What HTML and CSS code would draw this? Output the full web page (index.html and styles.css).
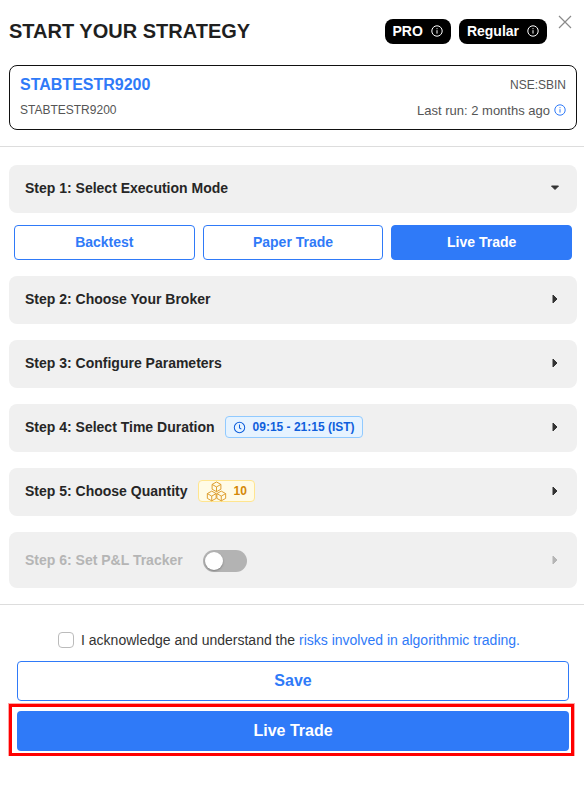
FILE: index.html
```html
<!DOCTYPE html>
<html lang="en">
<head>
  <meta charset="UTF-8" />
  <title>Start Your Strategy</title>
  <meta name="viewport" content="width=device-width, initial-scale=1.0" />
  <link rel="stylesheet" href="styles.css">
</head>
<body>
  <header class="top">
    <h1>START YOUR STRATEGY</h1>
    <div class="pills">
      <span class="pill">PRO
        <svg class="info" viewBox="0 0 12 12"><circle cx="6" cy="6" r="5.2"/><path d="M6 5.2v3.4M6 3.2v1"/></svg>
      </span>
      <span class="pill">Regular
        <svg class="info" viewBox="0 0 12 12"><circle cx="6" cy="6" r="5.2"/><path d="M6 5.2v3.4M6 3.2v1"/></svg>
      </span>
    </div>
    <svg class="close" viewBox="0 0 14 14"><path d="M1 1l12 12M13 1L1 13"/></svg>
  </header>

  <section class="strategy">
    <div class="strategy-row">
      <span class="strategy-name">STABTESTR9200</span>
      <span class="muted">NSE:SBIN</span>
    </div>
    <div class="strategy-row second">
      <span class="muted">STABTESTR9200</span>
      <span class="last-run">Last run: 2 months ago
        <svg class="info blue" viewBox="0 0 12 12"><circle cx="6" cy="6" r="5.2"/><path d="M6 5.2v3.4M6 3.2v1"/></svg>
      </span>
    </div>
  </section>

  <hr class="rule first">

  <main class="steps">
    <div class="step">
      <span class="step-title">Step 1: Select Execution Mode</span>
      <svg class="caret" viewBox="0 0 10 10"><path d="M1.500 3h7L5 6.500z"/></svg>
    </div>
    <div class="modes">
      <button class="mode">Backtest</button>
      <button class="mode">Paper Trade</button>
      <button class="mode active">Live Trade</button>
    </div>
    <div class="step">
      <span class="step-title">Step 2: Choose Your Broker</span>
      <svg class="caret" viewBox="0 0 10 10"><path d="M3 1v8L7 5z"/></svg>
    </div>
    <div class="step">
      <span class="step-title">Step 3: Configure Parameters</span>
      <svg class="caret" viewBox="0 0 10 10"><path d="M3 1v8L7 5z"/></svg>
    </div>
    <div class="step">
      <span class="step-title">Step 4: Select Time Duration</span>
      <span class="tag tag-time">
        <svg class="clock" viewBox="0 0 14 14"><circle cx="7" cy="7" r="5.6"/><path d="M7 3.800V7.400l2 1.400"/></svg>
        09:15 - 21:15 (IST)
      </span>
      <svg class="caret" viewBox="0 0 10 10"><path d="M3 1v8L7 5z"/></svg>
    </div>
    <div class="step">
      <span class="step-title">Step 5: Choose Quantity</span>
      <span class="tag tag-qty">
        <svg class="cubes" viewBox="0 0 22 22">
          <path d="M11 1l4.600 2.600v5L11 11.200 6.400 8.600v-5zM6.400 3.600L11 6.200l4.600-2.600M11 6.200v5"/>
          <path d="M6 10.600l4.600 2.600v5L6 20.800 1.400 18.200v-5zM1.400 13.200L6 15.800l4.600-2.600M6 15.800v5"/>
          <path d="M16 10.600l4.600 2.600v5L16 20.800l-4.600-2.600v-5zM11.400 13.200l4.600 2.600 4.600-2.600M16 15.800v5"/>
        </svg>
        10
      </span>
      <svg class="caret" viewBox="0 0 10 10"><path d="M3 1v8L7 5z"/></svg>
    </div>
    <div class="step disabled">
      <span class="step-title">Step 6: Set P&amp;L Tracker</span>
      <span class="toggle"><span class="knob"></span></span>
      <svg class="caret" viewBox="0 0 10 10"><path d="M3 1v8L7 5z"/></svg>
    </div>
  </main>

  <hr class="rule second">

  <footer class="actions">
    <label class="ack">
      <span class="check"></span>
      <span>I acknowledge and understand the <a href="#">risks involved in algorithmic trading.</a></span>
    </label>
    <button class="btn-save">Save</button>
    <div class="highlight">
      <button class="btn-live">Live Trade</button>
    </div>
  </footer>
</body>
</html>
```

FILE: styles.css
```css
* {
  box-sizing: border-box;
}
body {
  font-family: "Liberation Sans", Arial, sans-serif;
  margin: 0;
  background-color: #fff;
  color: #222;
}
.top {
  display: flex;
  align-items: center;
  height: 65px;
  padding: 0 0 3px 9px;
  position: relative;
}
h1 {
  font-size: 20px;
  font-weight: bold;
  margin: 0;
  color: #1f1f1f;
}
.pills {
  display: flex;
  gap: 8px;
  margin-left: auto;
  margin-right: 37px;
}
.pill {
  display: flex;
  align-items: center;
  height: 25px;
  padding: 0 8px;
  gap: 8px;
  background-color: #000;
  color: #fff;
  font-size: 14px;
  font-weight: bold;
  border-radius: 8px;
}
.info {
  width: 12px;
  height: 12px;
  fill: none;
  stroke: #fff;
  stroke-width: 1;
}
.info.blue {
  stroke: #2f7af8;
}
.close {
  position: absolute;
  top: 15px;
  right: 12px;
  width: 14px;
  height: 14px;
  fill: none;
  stroke: #8a8a8a;
  stroke-width: 1.2;
}
.strategy {
  margin: 0 7px 0 9px;
  height: 65px;
  border: 1px solid #111;
  border-radius: 8px;
  padding: 9px 10px 0;
}
.strategy-row {
  display: flex;
  justify-content: space-between;
  align-items: center;
  height: 20px;
}
.strategy-row.second {
  margin-top: 5px;
}
.strategy-name {
  font-size: 16px;
  font-weight: bold;
  color: #2f7af8;
}
.muted {
  font-size: 12px;
  color: #555;
}
.last-run {
  display: flex;
  align-items: center;
  gap: 4px;
  font-size: 13px;
  color: #555;
}
.rule {
  border: 0;
  border-top: 1px solid #ddd;
  margin: 16px 0 0;
}
.steps {
  display: flex;
  flex-direction: column;
  gap: 16px;
  margin: 18px 7px 0 9px;
}
.step {
  display: flex;
  align-items: center;
  height: 48px;
  padding: 0 17px 2px 16px;
  background-color: #f0f0f0;
  border-radius: 8px;
}
.step-title {
  font-size: 14px;
  font-weight: bold;
  color: #262626;
}
.caret {
  width: 10px;
  height: 10px;
  margin-left: auto;
  fill: #333;
  stroke: #333;
  stroke-width: 1;
  stroke-linejoin: round;
}
.modes {
  display: flex;
  gap: 8px;
  margin: -4px 5px 0;
}
.mode {
  flex: 1;
  height: 35px;
  padding: 0 0 2px;
  border: 1px solid #2f7af8;
  border-radius: 4px;
  background-color: #fff;
  color: #2f7af8;
  font-family: inherit;
  font-size: 14px;
  font-weight: bold;
}
.mode.active {
  background-color: #2f7af8;
  color: #fff;
}
.tag {
  display: flex;
  align-items: center;
  height: 22px;
  margin-left: 10px;
  border-radius: 4px;
  font-size: 12px;
  font-weight: bold;
}
.tag-time {
  gap: 7px;
  padding: 0 7px;
  background-color: #e6f3ff;
  border: 1px solid #91caff;
  color: #0f5fdc;
}
.clock {
  width: 13px;
  height: 13px;
  fill: none;
  stroke: #0f5fdc;
  stroke-width: 1.1;
}
.tag-qty {
  gap: 7px;
  padding: 0 7px;
  background-color: #fffbe6;
  border: 1px solid #ffe58f;
  color: #d48806;
}
.cubes {
  width: 21px;
  height: 21px;
  fill: none;
  stroke: #dc9a28;
  stroke-width: 1;
}
.step.disabled {
  height: 56px;
  padding-bottom: 0;
}
.step.disabled .step-title {
  color: #b5b5b5;
}
.step.disabled .caret {
  fill: #b5b5b5;
  stroke: #b5b5b5;
}
.toggle {
  display: flex;
  align-items: center;
  width: 44px;
  height: 22px;
  margin: 2px 0 0 20px;
  padding: 2px;
  background-color: #b3b3b3;
  border-radius: 11px;
}
.knob {
  width: 18px;
  height: 18px;
  background-color: #fff;
  border-radius: 50%;
  box-shadow: 0 1px 2px rgba(0, 0, 0, 0.3);
}
.actions {
  display: flex;
  flex-direction: column;
  align-items: flex-start;
  padding: 26px 9px 0;
}
.ack {
  display: flex;
  align-items: center;
  align-self: center;
  gap: 7px;
  height: 18px;
  margin-right: 6px;
  font-size: 14px;
  color: #333;
}
.ack a {
  color: #2f7af8;
  text-decoration: none;
}
.check {
  width: 16px;
  height: 16px;
  border: 1px solid #bbb;
  border-radius: 4px;
  background-color: #fff;
}
.btn-save,
.btn-live {
  display: block;
  width: 552px;
  height: 40px;
  border-radius: 4px;
  font-family: inherit;
  font-size: 16px;
  font-weight: bold;
}
.btn-save {
  margin: 12px 0 0 8px;
  border: 1px solid #2f7af8;
  background-color: #fff;
  color: #2f7af8;
}
.highlight {
  margin-top: 3px;
  border: 3px solid #f00;
  padding: 4px 2px 2px 5px;
  box-shadow: 0 0 0 1px rgba(255, 0, 0, 0.35);
  line-height: 0;
}
.btn-live {
  border: 0;
  background-color: #2f7af8;
  color: #fff;
}
```
